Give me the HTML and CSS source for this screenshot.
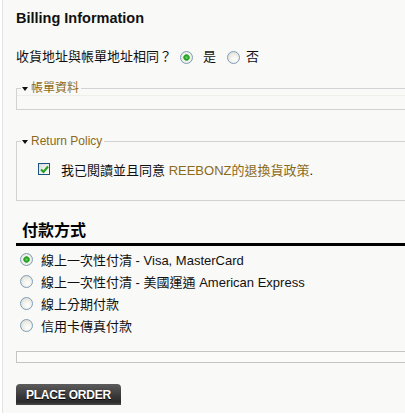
FILE: index.html
```html
<!DOCTYPE html>
<html lang="zh-Hant">
<head>
<meta charset="utf-8">
<title>Billing Information</title>
<link rel="stylesheet" href="styles.css">
</head>
<body>
<div class="panel">
  <h1 class="title">Billing Information</h1>
  <div class="same-row">
    <span class="q">收貨地址與帳單地址相同？</span>
    <input type="radio" name="same" class="radio r-yes" checked>
    <span class="opt">是</span>
    <input type="radio" name="same" class="radio r-no">
    <span class="opt-no">否</span>
  </div>

  <fieldset class="fs fs-billing">
    <legend class="lg"><span class="tri"></span>帳單資料</legend>
    <div class="fs-body-empty"></div>
  </fieldset>

  <fieldset class="fs fs-policy">
    <legend class="lg"><span class="tri"></span>Return Policy</legend>
    <div class="fs-body">
      <span class="check"><svg width="9" height="9" viewBox="0 0 9 9"><path d="M1 4.5 L3.5 7 L8 1.5" fill="none" stroke="#21a121" stroke-width="2"/></svg></span>
      <span class="agree">我已閱讀並且同意 <a class="link">REEBONZ的退換貨政策</a>.</span>
    </div>
  </fieldset>

  <h2 class="pay-title">付款方式</h2>
  <ul class="pay-list">
    <li><input type="radio" name="pay" class="radio" checked><span>線上一次性付清 - Visa, MasterCard</span></li>
    <li><input type="radio" name="pay" class="radio"><span>線上一次性付清 - 美國運通 American Express</span></li>
    <li><input type="radio" name="pay" class="radio"><span>線上分期付款</span></li>
    <li><input type="radio" name="pay" class="radio"><span>信用卡傳真付款</span></li>
  </ul>

  <div class="empty-box"></div>

  <button class="place">PLACE ORDER</button>
</div>
</body>
</html>
```

FILE: styles.css
```css
html, body {
  margin: 0;
  padding: 0;
  background: #ffffff;
}
body {
  font-family: "Liberation Sans", "Noto Sans CJK TC", sans-serif;
  font-size: 13px;
  color: #111;
}
.panel {
  margin-left: 2px;
  height: 413px;
  box-sizing: border-box;
  border-left: 1px solid #e3e3e3;
  background: #f9f9f7;
  padding: 9px 0 0 13px;
}
.title {
  margin: 0;
  font-size: 14.5px;
  line-height: 18px;
  font-weight: bold;
  color: #111;
}
.same-row {
  margin-top: 20px;
  height: 20px;
  line-height: 20px;
  display: flex;
  align-items: center;
}
.q { width: 164px; }
.radio {
  appearance: none;
  -webkit-appearance: none;
  width: 13px;
  height: 13px;
  margin: 0;
  border-radius: 50%;
  border: 1px solid #7f9db9;
  box-sizing: border-box;
  background: radial-gradient(circle at 60% 65%, #ffffff 0%, #f0f0ea 45%, #d4d4cc 100%);
  flex: none;
}
.radio:checked {
  background: radial-gradient(circle at 50% 50%, #6fd36f 0, #21a121 2.2px, #56b656 3px, #f4f4ee 3.6px, #dcdcd4 100%);
}
.r-yes { margin-right: 10px; }
.opt { margin-right: 11px; }
.r-no { margin-right: 6px; }

.fs {
  margin: 0;
  padding: 0;
  border: 1px solid #d2d2d2;
  border-right: none;
  min-width: 0;
}
.fs-billing { margin-top: 14px; }
.fs-policy { margin-top: 24px; }
.lg {
  margin-left: 4px;
  padding: 0 2px 0 1px;
  font-size: 12px;
  line-height: 14px;
  color: #8b6a1b;
  display: flex;
  align-items: center;
}
.tri {
  width: 0;
  height: 0;
  border-left: 3.5px solid transparent;
  border-right: 3.5px solid transparent;
  border-top: 4px solid #111;
  margin-right: 3px;
  margin-top: 1px;
}
.fs-body-empty {
  height: 13px;
  border-top: 1px solid #eeeeea;
}
.fs-body {
  padding: 11px 0 21px 21px;
  display: flex;
  align-items: center;
  height: 20px;
}
.check {
  width: 12px;
  height: 12px;
  box-sizing: border-box;
  border: 1px solid #1c5180;
  background: linear-gradient(135deg, #dcdcd6, #ffffff);
  display: flex;
  align-items: center;
  justify-content: center;
  margin-right: 11px;
}
.check svg { display: block; }
.link { color: #8b6a1b; text-decoration: none; }

.pay-title {
  margin: 20px 0 0 0;
  padding: 0 0 2px 6px;
  font-size: 16px;
  line-height: 20px;
  font-weight: bold;
  color: #000;
  border-bottom: 3px solid #000;
}
.pay-list {
  list-style: none;
  margin: 2px 0 0 0;
  padding: 0;
}
.pay-list li {
  height: 22px;
  display: flex;
  align-items: center;
  padding-left: 4px;
}
.pay-list .radio { margin-right: 8px; }

.empty-box {
  margin-top: 15px;
  height: 12px;
  box-sizing: border-box;
  border: 1px solid #c4c4c4;
  border-right: none;
  background: #fbfbfa;
}
.place {
  margin-top: 21px;
  display: block;
  width: 105px;
  height: 21px;
  padding: 0;
  border: none;
  border-radius: 4px 4px 0 0;
  background: linear-gradient(#5c5c5c 0%, #3a3a3a 55%, #2a2a2a 85%, #4a4a4a 100%);
  color: #fff;
  font-family: "Liberation Sans", sans-serif;
  font-weight: bold;
  font-size: 12px;
  letter-spacing: -0.2px;
  text-shadow: 0 1px 0 #000;
}
```
